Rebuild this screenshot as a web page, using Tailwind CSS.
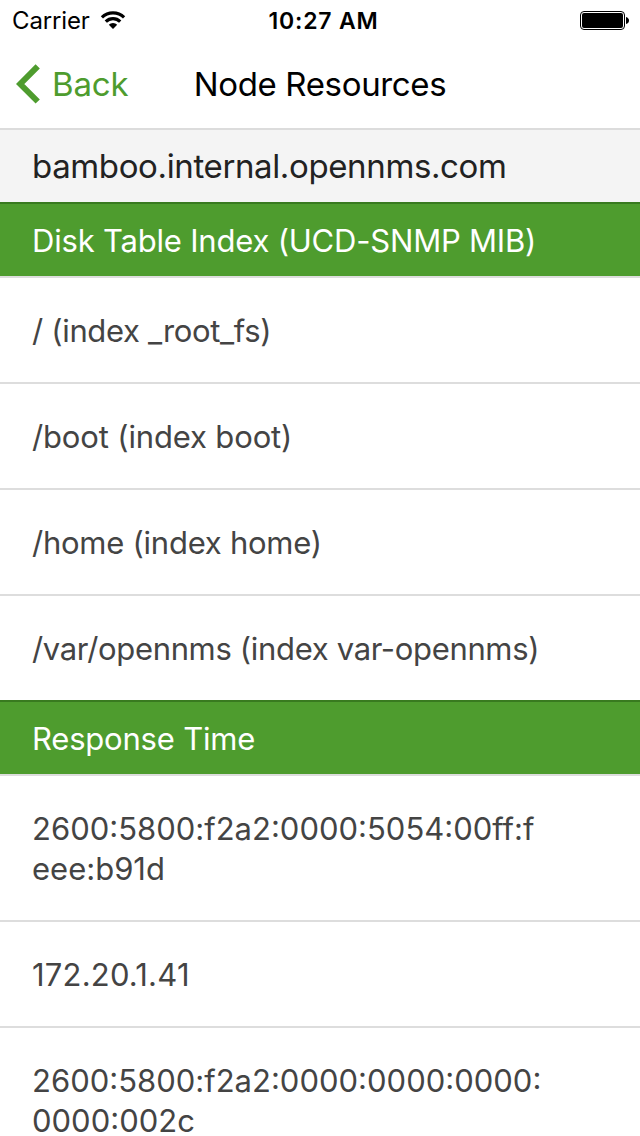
<!DOCTYPE html>
<html lang="en"><head><meta charset="utf-8"><title>Node Resources</title>
<script src="https://cdn.jsdelivr.net/npm/@tailwindcss/browser@4"></script>
</head>
<body class="w-[640px] h-[1136px] overflow-hidden bg-white font-['Inter',sans-serif] text-[#444]">
<header class="h-[130px] border-b-2 border-[#dcdcdc] text-black">
<div class="h-10 grid grid-cols-[1fr_auto_1fr] items-center pl-3 pr-[11px]">
<div class="flex items-center gap-[10px]"><span class="pt-0.5 text-[24px] tracking-[-0.15px] whitespace-nowrap">Carrier</span>
<svg class="w-[26px] h-5" viewBox="0 0 26 20" fill="none" stroke="#000" stroke-width="3.2"><path d="M1.9 7.3a16 16 0 0 1 22.2 0M5.8 11.7a10.2 10.2 0 0 1 14.4 0"/><path d="M13 19l-4.2-4.2a5.9 5.9 0 0 1 8.4 0z" fill="#000" stroke="none"/></svg></div>
<span class="pt-0.5 pl-[6px] text-[23px] tracking-[0.8px] font-semibold whitespace-nowrap">10:27 AM</span>
<svg class="w-[49px] h-[19px] justify-self-end" viewBox="0 0 49 19"><rect x=".5" y=".5" width="44" height="18" rx="3.5" fill="none" stroke="#000"/><rect x="2" y="2" width="41" height="15" rx="2"/><path d="M46 6q3 1 3 3.5T46 13z"/></svg>
</div>
<div class="h-[88px] grid grid-cols-[1fr_auto_1fr] items-center px-4">
<div class="flex items-center gap-3 text-[#4e9c2e]"><svg class="w-6 h-10" viewBox="0 0 24 40" fill="none" stroke="currentColor" stroke-width="6" stroke-linejoin="miter"><path d="M21.7 2.3L4.2 20l17.5 17.5"/></svg><span class="pt-0.5 text-[33px] tracking-[-0.15px]">Back</span></div>
<h1 class="pt-0.5 text-[33px] tracking-[-0.35px] whitespace-nowrap">Node Resources</h1></div>
</header>
<main>
<div class="h-[72px] bg-[#f4f4f4] px-8 pt-0.5 flex items-center text-[#222] text-[33px] tracking-[-0.37px]"><span>bamboo.internal.opennms.com</span></div>
<h2 class="h-[74px] bg-[#4e9c2e] border-t-2 border-[#387a1f] px-8 pt-0.5 flex items-center text-white text-[31px] tracking-[-0.2px]"><span>Disk Table Index (UCD-SNMP MIB)</span></h2>
<ul class="text-[31px] leading-10">
<li class="h-[106px] border-t-2 border-[#ddd] px-8 pt-px flex items-center tracking-[-0.33px]">/ (index _root_fs)</li>
<li class="h-[106px] border-t-2 border-[#ddd] px-8 pt-px flex items-center tracking-[-0.15px]">/boot (index boot)</li>
<li class="h-[106px] border-t-2 border-[#ddd] px-8 pt-px flex items-center tracking-[-0.25px]">/home (index home)</li>
<li class="h-[106px] border-t-2 border-[#ddd] px-8 pt-px flex items-center tracking-[-0.33px]">/var/opennms (index var-opennms)</li>
</ul>
<h2 class="h-[74px] bg-[#4e9c2e] border-t-2 border-[#387a1f] px-8 pt-0.5 flex items-center text-white text-[31px] tracking-[-0.2px]"><span>Response Time</span></h2>
<ul class="text-[31px] leading-10">
<li class="h-[146px] border-t-2 border-[#ddd] px-8 pt-px flex items-center"><span>2600:5800:f2a2:0000:5054:00ff:f<br>eee:b91d</span></li>
<li class="h-[106px] border-t-2 border-[#ddd] px-8 pt-px flex items-center tracking-[0.2px]">172.20.1.41</li>
<li class="h-[108px] border-t-2 border-[#ddd] px-8 pt-[33px]"><span>2600:5800:f2a2:0000:0000:0000:<br>0000:002c</span></li>
</ul>
</main></body></html>
